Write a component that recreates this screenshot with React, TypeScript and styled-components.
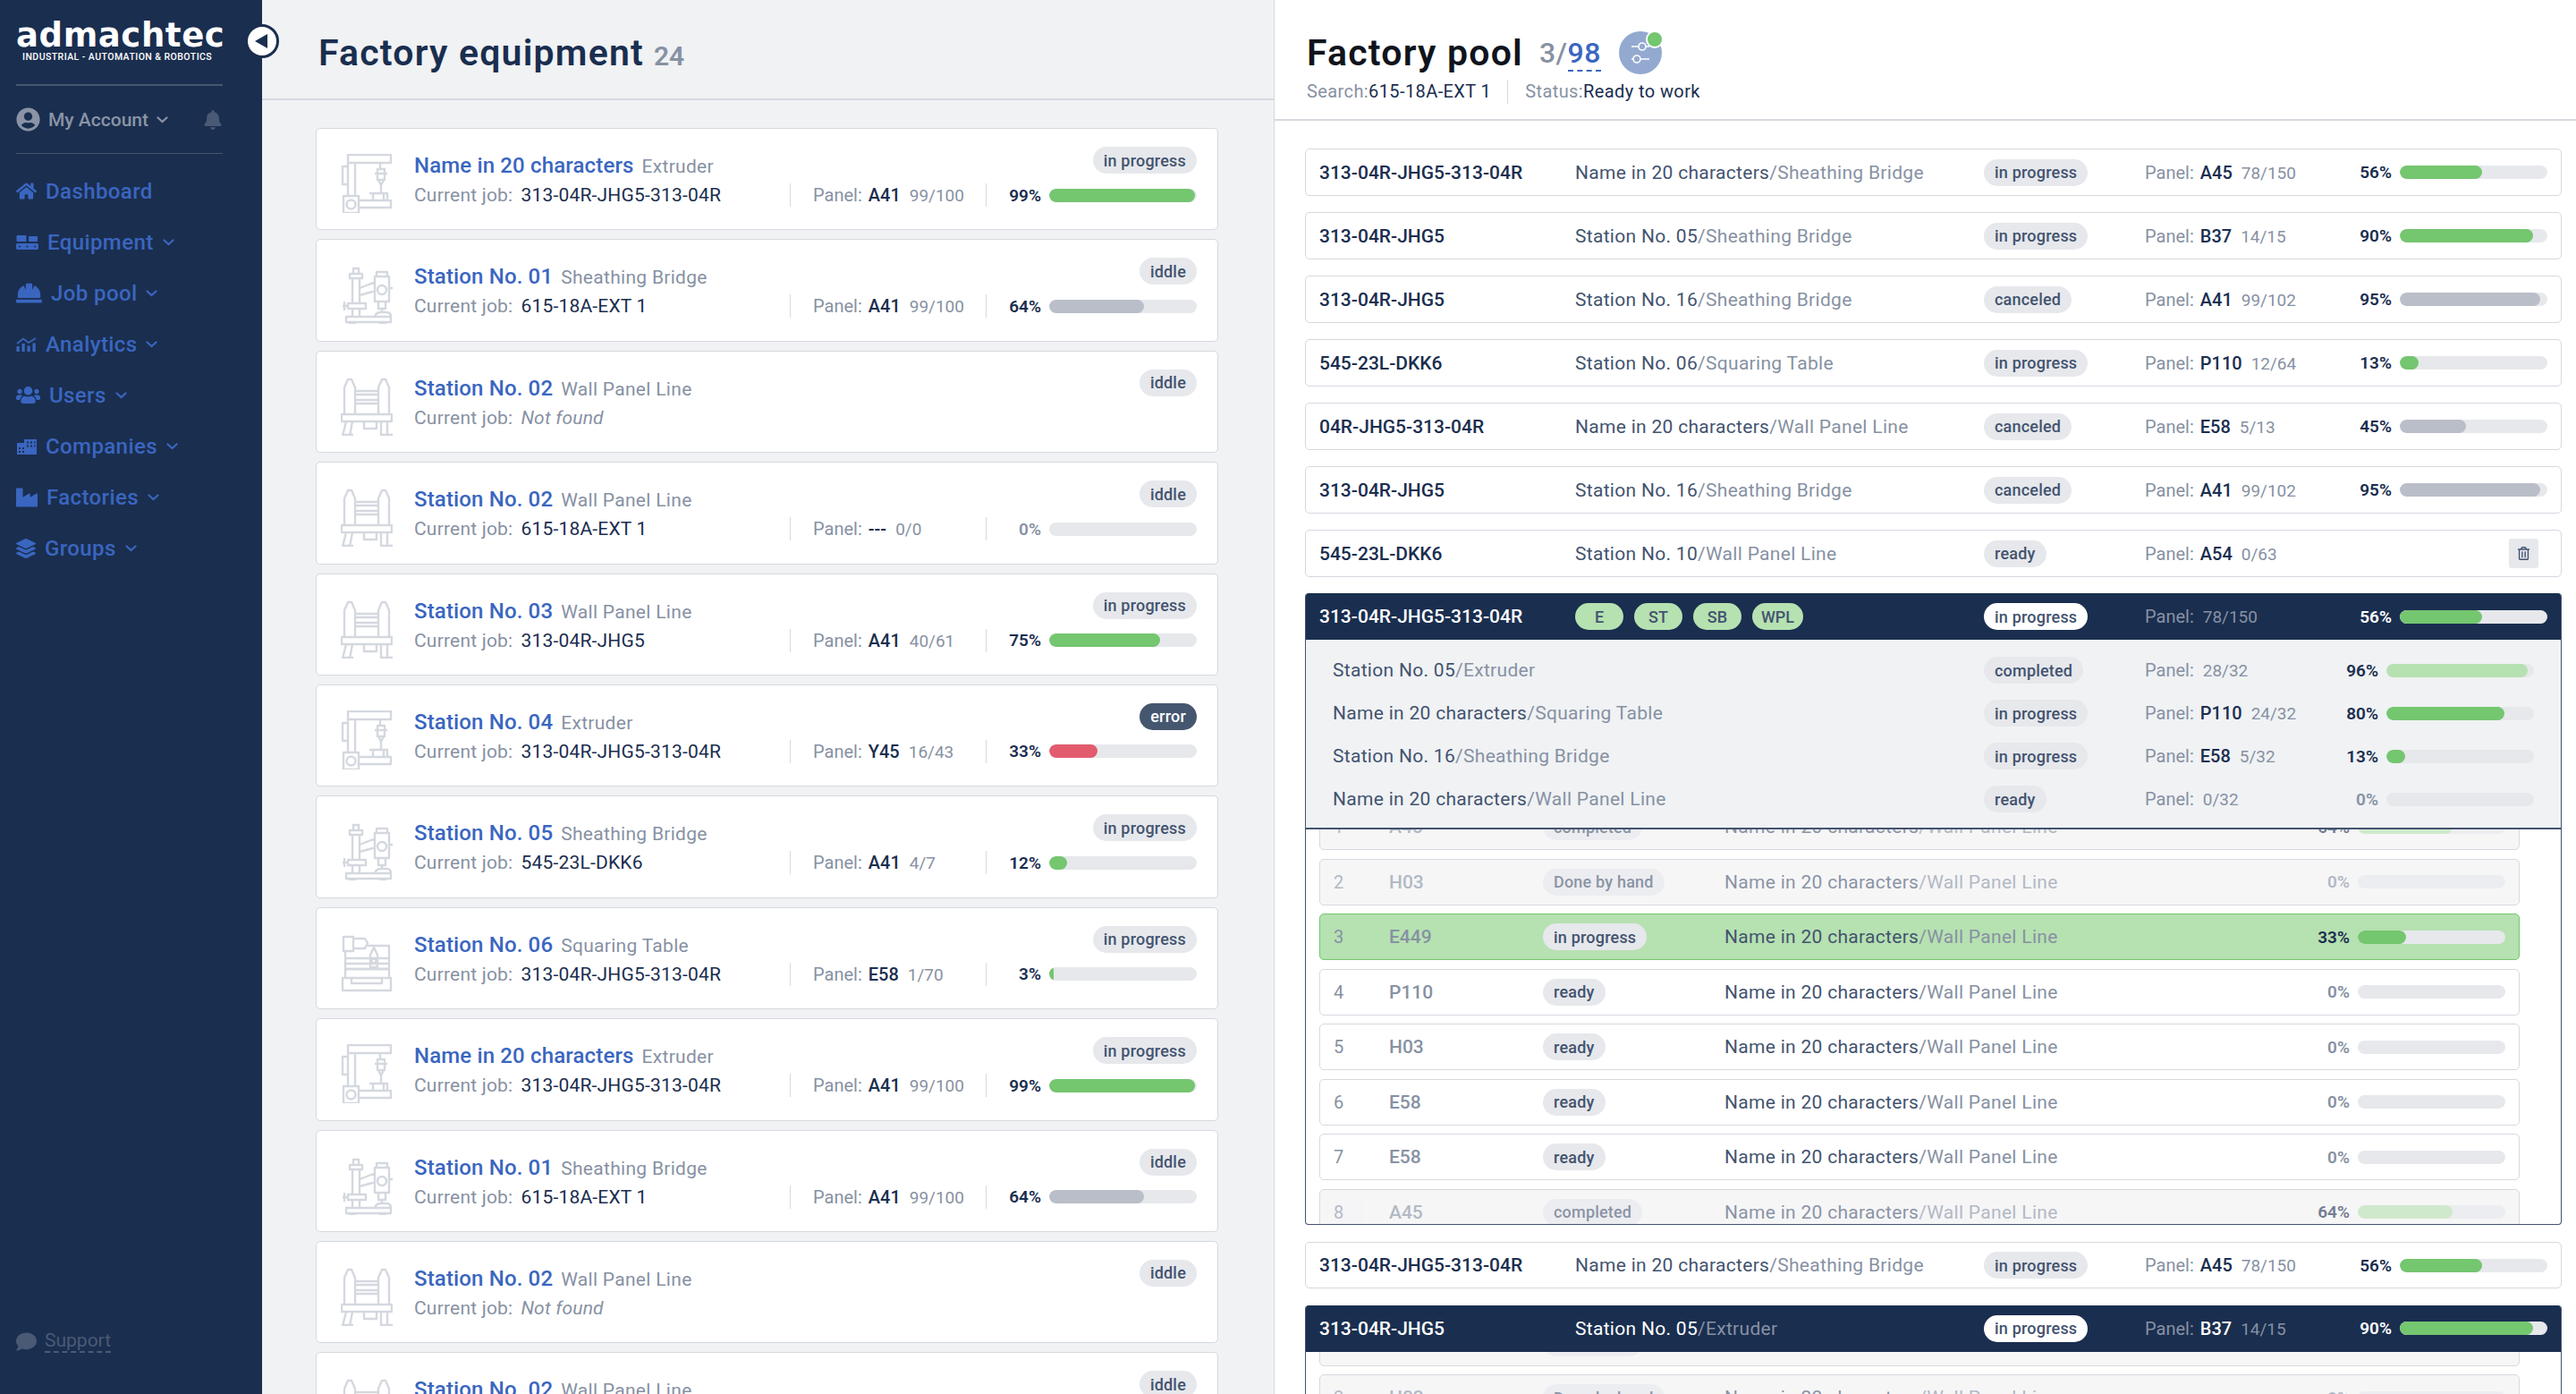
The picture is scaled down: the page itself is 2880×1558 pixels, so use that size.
import React from 'react';
import styled, { createGlobalStyle } from 'styled-components';
import { FaBell, FaComment, FaHardHat, FaHome, FaIndustry, FaLayerGroup, FaRegTrashAlt, FaUserCircle, FaUsers } from 'react-icons/fa';

const navy = '#1a2e4f';
const blue = '#3a66c0';
const green = '#74c66f';
const lightGreen = '#b6e1b1';
const grey = '#8791a3';
const slate = '#43536f';
const line = '#d5d9df';

const GlobalStyle = createGlobalStyle`
  html, body { margin: 0; height: 100%; overflow: hidden; background: #fff; }
  body { font-family: Roboto, "Open Sans", sans-serif; color: ${navy}; }
  * { box-sizing: border-box; }
`;

type MachineKind = 'extruder' | 'bridge' | 'wall' | 'table';

const MachineIcon = ({ kind }: { kind: MachineKind }) => (
  <MachineSvg viewBox="0 0 58 66" fill="none" stroke="#d4d8df" strokeWidth="2.4" strokeLinejoin="round">
    {kind === 'extruder' && (
      <>
        <path d="M8 1h48v9H8zM8 10v37M16 10v37M8 14H2v20h6M44 10v6M38 22h14M41 17h8v12h-8zM42 29l3 6 3-6M45 35v8" />
        <path d="M3 47h17v19H3zM20 52h36v8H20zM32 44h20v8M36 44v8M48 44v8" />
        <circle cx="11.5" cy="56.5" r="5" />
      </>
    )}
    {kind === 'bridge' && (
      <>
        <path d="M14 4h6v6h-6zM10 10h14v5H10zM13 15v28M21 15v28M8 43h20v6H8zM13 49v9M21 49v9M2 46h6M4 41v10" />
        <path d="M21 26l18-7M21 34l18-5M40 8h12v5H40zM38 13h16v28H38zM42 41h8v8h-8zM46 49v5M54 26h4" />
        <circle cx="46" cy="28" r="5" />
        <path d="M6 58h50v6H6zM38 58c1-4 3-5 7-5h6c3 0 5 2 5 5M10 64v2h6v-2M44 64v2h6v-2" />
      </>
    )}
    {kind === 'wall' && (
      <>
        <path d="M4 42V12l4-9h4l4 9v30M42 42V12l4-9h4l4 9v30M16 16h26M16 30h26M16 20h26v6H16z" />
        <path d="M1 42h56v8H1zM6 50L2 66M13 50l-3 16M45 50v16M52 50v16M1 65h13M44 65h14M26 50h14v8H26z" />
      </>
    )}
    {kind === 'table' && (
      <>
        <path d="M3 4h11v16H3zM14 6h13l3 5-3 6H14M30 14h20l4 0v26H5V20M5 28h49M5 34h49M33 24l4-8 4 8v14h-8z" />
        <circle cx="37" cy="31" r="2.5" />
        <path d="M5 40h49v10H5zM2 50h54v14H2zM12 50v6h34v-6" />
      </>
    )}
  </MachineSvg>
);

const ConveyorIcon = () => (
  <svg width="25" height="16" viewBox="0 0 25 16" fill="currentColor">
    <rect x="0.5" width="11" height="7" rx="1" />
    <rect x="14" y="1" width="10" height="6" rx="1" />
    <path d="M2.5 9h20a3.4 3.4 0 0 1 0 7h-20a3.4 3.4 0 0 1 0-7z" />
    <g fill={navy}><circle cx="4" cy="12.5" r="1" /><circle cx="12.5" cy="12.5" r="1" /><circle cx="21" cy="12.5" r="1" /></g>
  </svg>
);

const AnalyticsIcon = () => (
  <svg width="23" height="16" viewBox="0 0 23 16" fill="currentColor">
    <rect x="0.5" y="10" width="3.2" height="6" /><rect x="6.5" y="7" width="3.2" height="9" />
    <rect x="12.5" y="9.5" width="3.2" height="6.5" /><rect x="18.5" y="6.5" width="3.2" height="9.5" />
    <path d="M1 7l7-5.5L14 6l8-5" fill="none" stroke="currentColor" strokeWidth="1.6" />
  </svg>
);

const CompanyIcon = () => (
  <svg width="23" height="18" viewBox="0 0 23 18" fill="currentColor">
    <path fillRule="evenodd" d="M1 5h8V1h14v17H1zM12 3.500h2v2h-2zM16 3.500h2v2h-2zM20 3.500h1.500v2H20zM12 7.500h2v2h-2zM16 7.500h2v2h-2zM20 7.500h1.500v2H20zM3 10h2v2H3zM7 10h2v2H7zM3 14h2v2H3zM7 14h2v2H7z" />
  </svg>
);

const FilterIcon = () => (
  <svg width="22" height="30" viewBox="0 0 22 30" fill="none" stroke="#fff" strokeWidth="1.6">
    <circle cx="13" cy="8" r="4" /><path d="M1 8h8M17 8h4" />
    <circle cx="7" cy="22" r="4" /><path d="M1 22h2M11 22h10" />
  </svg>
);

const Chevron = () => (
  <ChevronSvg width="13" height="8" viewBox="0 0 13 8" fill="none" stroke="currentColor" strokeWidth="2.2" strokeLinecap="round">
    <path d="M1.500 1.500l5 4.500 5-4.500" />
  </ChevronSvg>
);

const navItems: { label: string; icon: React.ReactNode; arrow?: boolean }[] = [
  { label: 'Dashboard', icon: <FaHome size={23} /> },
  { label: 'Equipment', icon: <ConveyorIcon />, arrow: true },
  { label: 'Job pool', icon: <FaHardHat size={29} />, arrow: true },
  { label: 'Analytics', icon: <AnalyticsIcon />, arrow: true },
  { label: 'Users', icon: <FaUsers size={27} />, arrow: true },
  { label: 'Companies', icon: <CompanyIcon />, arrow: true },
  { label: 'Factories', icon: <FaIndustry size={24} />, arrow: true },
  { label: 'Groups', icon: <FaLayerGroup size={22} />, arrow: true },
];

interface Station {
  name: string;
  type: string;
  kind: MachineKind;
  job: string;
  status: string;
  code?: string;
  count?: string;
  pct?: number;
  tone?: 'green' | 'grey' | 'red';
}

const stations: Station[] = [
  { name: 'Name in 20 characters', type: 'Extruder', kind: 'extruder', job: '313-04R-JHG5-313-04R', status: 'in progress', code: 'A41', count: '99/100', pct: 99, tone: 'green' },
  { name: 'Station No. 01', type: 'Sheathing Bridge', kind: 'bridge', job: '615-18A-EXT 1', status: 'iddle', code: 'A41', count: '99/100', pct: 64, tone: 'grey' },
  { name: 'Station No. 02', type: 'Wall Panel Line', kind: 'wall', job: '', status: 'iddle' },
  { name: 'Station No. 02', type: 'Wall Panel Line', kind: 'wall', job: '615-18A-EXT 1', status: 'iddle', code: '---', count: '0/0', pct: 0, tone: 'grey' },
  { name: 'Station No. 03', type: 'Wall Panel Line', kind: 'wall', job: '313-04R-JHG5', status: 'in progress', code: 'A41', count: '40/61', pct: 75, tone: 'green' },
  { name: 'Station No. 04', type: 'Extruder', kind: 'extruder', job: '313-04R-JHG5-313-04R', status: 'error', code: 'Y45', count: '16/43', pct: 33, tone: 'red' },
  { name: 'Station No. 05', type: 'Sheathing Bridge', kind: 'bridge', job: '545-23L-DKK6', status: 'in progress', code: 'A41', count: '4/7', pct: 12, tone: 'green' },
  { name: 'Station No. 06', type: 'Squaring Table', kind: 'table', job: '313-04R-JHG5-313-04R', status: 'in progress', code: 'E58', count: '1/70', pct: 3, tone: 'green' },
  { name: 'Name in 20 characters', type: 'Extruder', kind: 'extruder', job: '313-04R-JHG5-313-04R', status: 'in progress', code: 'A41', count: '99/100', pct: 99, tone: 'green' },
  { name: 'Station No. 01', type: 'Sheathing Bridge', kind: 'bridge', job: '615-18A-EXT 1', status: 'iddle', code: 'A41', count: '99/100', pct: 64, tone: 'grey' },
  { name: 'Station No. 02', type: 'Wall Panel Line', kind: 'wall', job: '', status: 'iddle' },
  { name: 'Station No. 02', type: 'Wall Panel Line', kind: 'wall', job: '615-18A-EXT 1', status: 'iddle', code: '---', count: '0/0', pct: 0, tone: 'grey' },
];

const toneColors = { green, grey: '#b9bec9', red: '#e25c6e', pale: lightGreen };
type Tone = keyof typeof toneColors;

const Progress = ({ pct, tone = 'green', light }: { pct: number; tone?: Tone; light?: boolean }) => (
  <ProgressWrap>
    <Percent $light={light} $empty={pct === 0}>{pct}%</Percent>
    <Track>
      {pct > 0 && <Fill $tone={tone} style={{ width: `${Math.max(pct, 2)}%` }} />}
    </Track>
  </ProgressWrap>
);

const StationCard = ({ s }: { s: Station }) => (
  <Card>
    <MachineIcon kind={s.kind} />
    <CardBody>
      <CardTop>
        <CardTitle>{s.name}<CardType>{s.type}</CardType></CardTitle>
        <Pill $dark={s.status === 'error'}>{s.status}</Pill>
      </CardTop>
      <CardBottom>
        <JobCell>
          <Muted>Current job:</Muted>
          {s.job ? <JobValue>{s.job}</JobValue> : <NotFound>Not found</NotFound>}
        </JobCell>
        {s.pct !== undefined && (
          <>
            <PanelCell><PanelInfo code={s.code} count={s.count} /></PanelCell>
            <ProgressCell><Progress pct={s.pct} tone={s.tone} /></ProgressCell>
          </>
        )}
      </CardBottom>
    </CardBody>
  </Card>
);

const PanelInfo = ({ code, count, light }: { code?: string; count?: string; light?: boolean }) => (
  <PanelText>
    <Muted>Panel:</Muted>
    {code && <PanelCode $light={light}>{code}</PanelCode>}
    <PanelCount>{count}</PanelCount>
  </PanelText>
);

interface Job {
  id: string;
  name: string;
  type: string;
  status: string;
  code?: string;
  count: string;
  pct?: number;
  tone?: Tone;
}

const jobs: Job[] = [
  { id: '313-04R-JHG5-313-04R', name: 'Name in 20 characters', type: 'Sheathing Bridge', status: 'in progress', code: 'A45', count: '78/150', pct: 56 },
  { id: '313-04R-JHG5', name: 'Station No. 05', type: 'Sheathing Bridge', status: 'in progress', code: 'B37', count: '14/15', pct: 90 },
  { id: '313-04R-JHG5', name: 'Station No. 16', type: 'Sheathing Bridge', status: 'canceled', code: 'A41', count: '99/102', pct: 95, tone: 'grey' },
  { id: '545-23L-DKK6', name: 'Station No. 06', type: 'Squaring Table', status: 'in progress', code: 'P110', count: '12/64', pct: 13 },
  { id: '04R-JHG5-313-04R', name: 'Name in 20 characters', type: 'Wall Panel Line', status: 'canceled', code: 'E58', count: '5/13', pct: 45, tone: 'grey' },
  { id: '313-04R-JHG5', name: 'Station No. 16', type: 'Sheathing Bridge', status: 'canceled', code: 'A41', count: '99/102', pct: 95, tone: 'grey' },
  { id: '545-23L-DKK6', name: 'Station No. 10', type: 'Wall Panel Line', status: 'ready', code: 'A54', count: '0/63' },
];

const subJobs: Job[] = [
  { id: '', name: 'Station No. 05', type: 'Extruder', status: 'completed', count: '28/32', pct: 96, tone: 'pale' },
  { id: '', name: 'Name in 20 characters', type: 'Squaring Table', status: 'in progress', code: 'P110', count: '24/32', pct: 80 },
  { id: '', name: 'Station No. 16', type: 'Sheathing Bridge', status: 'in progress', code: 'E58', count: '5/32', pct: 13 },
  { id: '', name: 'Name in 20 characters', type: 'Wall Panel Line', status: 'ready', count: '0/32', pct: 0 },
];

const queue = [
  { n: 1, code: 'A45', status: 'completed', pct: 64, state: 'faded' },
  { n: 2, code: 'H03', status: 'Done by hand', pct: 0, state: 'faded' },
  { n: 3, code: 'E449', status: 'in progress', pct: 33, state: 'active' },
  { n: 4, code: 'P110', status: 'ready', pct: 0 },
  { n: 5, code: 'H03', status: 'ready', pct: 0 },
  { n: 6, code: 'E58', status: 'ready', pct: 0 },
  { n: 7, code: 'E58', status: 'ready', pct: 0 },
  { n: 8, code: 'A45', status: 'completed', pct: 64, state: 'faded' },
];

const QueueList = ({ rows }: { rows: typeof queue }) => (
  <Queue>
    {rows.map((q) => (
      <QueueRow key={q.n} $state={q.state}>
        <QueueContent $faded={q.state === 'faded'}>
          <QueueNum>{q.n}</QueueNum>
          <QueueCode>{q.code}</QueueCode>
          <div><Pill>{q.status}</Pill></div>
          <NameText>Name in 20 characters<TypeText>/Wall Panel Line</TypeText></NameText>
          <Progress pct={q.pct} tone={q.state === 'faded' ? 'pale' : 'green'} />
        </QueueContent>
      </QueueRow>
    ))}
  </Queue>
);

const JobRow = ({ job }: { job: Job }) => (
  <Row>
    <RowId>{job.id}</RowId>
    <NameText>{job.name}<TypeText>/{job.type}</TypeText></NameText>
    <div><Pill>{job.status}</Pill></div>
    <PanelInfo code={job.code} count={job.count} />
    {job.pct !== undefined
      ? <Progress pct={job.pct} tone={job.tone} />
      : <TrashButton><FaRegTrashAlt size={15} /></TrashButton>}
  </Row>
);

export default function App() {
  return (
    <Page>
      <GlobalStyle />
      <Sidebar>
        <Logo>admachtec</Logo>
        <Tagline>INDUSTRIAL - AUTOMATION &amp; ROBOTICS</Tagline>
        <Account>
          <FaUserCircle size={27} />
          <AccountName>My Account</AccountName>
          <Chevron />
          <BellSlot><FaBell size={22} /></BellSlot>
        </Account>
        <Nav>
          {navItems.map((item) => (
            <NavItem key={item.label}>
              {item.icon}
              <span>{item.label}</span>
              {item.arrow && <Chevron />}
            </NavItem>
          ))}
        </Nav>
        <Support><FaComment size={23} /><SupportLink>Support</SupportLink></Support>
        <Collapse>
          <svg width="14" height="16" viewBox="0 0 14 16"><path d="M0 8l14-8v16z" fill={navy} /></svg>
        </Collapse>
      </Sidebar>

      <Equipment>
        <EquipmentHeader>
          <Title>Factory equipment</Title>
          <TitleCount>24</TitleCount>
        </EquipmentHeader>
        <CardList>
          {stations.map((s, i) => <StationCard key={i} s={s} />)}
        </CardList>
      </Equipment>

      <Pool>
        <PoolHeader>
          <PoolTitleRow>
            <PoolTitle>Factory pool</PoolTitle>
            <PoolCount>3/<PoolTotal>98</PoolTotal></PoolCount>
            <FilterButton><FilterIcon /></FilterButton>
          </PoolTitleRow>
          <PoolMeta>
            <MetaItem><Muted>Search:</Muted>615-18A-EXT 1</MetaItem>
            <MetaItem $split><Muted>Status:</Muted>Ready to work</MetaItem>
          </PoolMeta>
        </PoolHeader>
        <PoolList>
          {jobs.map((job, i) => <JobRow key={i} job={job} />)}

          <Expanded $height={706}>
            <StickyHead>
              <DarkRow>
                <RowId $light>313-04R-JHG5-313-04R</RowId>
                <Chips>
                  {['E', 'ST', 'SB', 'WPL'].map((c) => <Chip key={c}>{c}</Chip>)}
                </Chips>
                <div><Pill $white>in progress</Pill></div>
                <PanelInfo count="78/150" />
                <Progress pct={56} light />
              </DarkRow>
              <SubList>
                {subJobs.map((job, i) => (
                  <SubRow key={i}>
                    <NameText>{job.name}<TypeText>/{job.type}</TypeText></NameText>
                    <div><Pill>{job.status}</Pill></div>
                    <PanelInfo code={job.code} count={job.count} />
                    <Progress pct={job.pct ?? 0} tone={job.tone} />
                  </SubRow>
                ))}
              </SubList>
            </StickyHead>
            <QueueUnder><QueueList rows={queue} /></QueueUnder>
          </Expanded>

          <JobRow job={{ ...jobs[0] }} />

          <Expanded $height={130}>
            <StickyHead>
              <DarkRow>
                <RowId $light>313-04R-JHG5</RowId>
                <NameText $light>Station No. 05<TypeText>/Extruder</TypeText></NameText>
                <div><Pill $white>in progress</Pill></div>
                <PanelInfo code="B37" count="14/15" light />
                <Progress pct={90} light />
              </DarkRow>
            </StickyHead>
            <QueueTail><QueueList rows={queue.slice(0, 2).map((q) => ({ ...q, pct: 0, state: 'faded' }))} /></QueueTail>
          </Expanded>
        </PoolList>
      </Pool>
    </Page>
  );
}

const Page = styled.div`
  display: flex;
  height: 1558px;
  overflow: hidden;
`;

const Sidebar = styled.aside`
  position: relative;
  flex: none;
  width: 293px;
  padding: 24px 44px 0 18px;
  display: flex;
  flex-direction: column;
  background: ${navy};
  z-index: 2;
`;

const Logo = styled.div`
  height: 32px;
  font-family: "DejaVu Sans", sans-serif;
  font-size: 37px;
  line-height: 32px;
  font-weight: 700;
  letter-spacing: 0.6px;
  color: #fff;
  white-space: nowrap;
`;

const Tagline = styled.div`
  height: 38px;
  padding: 2px 0 0 7px;
  font-size: 10.5px;
  line-height: 12px;
  font-weight: 500;
  letter-spacing: 0.45px;
  color: #fff;
  white-space: nowrap;
`;

const Account = styled.div`
  display: flex;
  align-items: center;
  gap: 9px;
  height: 78px;
  border-top: 2px solid #46566f;
  border-bottom: 1px solid #46566f;
  color: #8a94a6;
`;

const AccountName = styled.span`
  font-size: 21px;
  font-weight: 500;
`;

const BellSlot = styled.span`
  display: flex;
  margin-left: auto;
  color: #4a5a75;
`;

const ChevronSvg = styled.svg`
  flex: none;
`;

const Nav = styled.nav`
  display: flex;
  flex-direction: column;
  padding-top: 13px;
`;

const NavItem = styled.div`
  display: flex;
  align-items: center;
  gap: 10px;
  height: 57px;
  font-size: 24px;
  font-weight: 500;
  letter-spacing: 0.4px;
  color: ${blue};
`;

const Support = styled.div`
  display: flex;
  align-items: center;
  gap: 9px;
  margin-top: auto;
  padding-bottom: 46px;
  color: #4a5a75;
`;

const SupportLink = styled.span`
  font-size: 21px;
  border-bottom: 2px dashed #4a5a75;
`;

const Collapse = styled.button`
  position: absolute;
  top: 27px;
  right: -19px;
  width: 38px;
  height: 38px;
  padding: 0 3px 0 0;
  display: flex;
  align-items: center;
  justify-content: center;
  border: 3px solid ${navy};
  border-radius: 50%;
  background: #fff;
`;

const Equipment = styled.section`
  flex: none;
  width: 1131px;
  background: #f0f2f4;
`;

const EquipmentHeader = styled.header`
  display: flex;
  align-items: baseline;
  gap: 11px;
  height: 112px;
  padding: 31px 0 0 63px;
  border-bottom: 2px solid ${line};
`;

const Title = styled.h1`
  margin: 0;
  font-size: 41px;
  line-height: 56px;
  font-weight: 600;
  letter-spacing: 1.2px;
  color: ${navy};
`;

const TitleCount = styled.span`
  font-size: 30px;
  font-weight: 600;
  color: ${grey};
`;

const CardList = styled.div`
  display: flex;
  flex-direction: column;
  gap: 10px;
  padding: 31px 62px 0 60px;
`;

const Card = styled.article`
  flex: none;
  display: flex;
  align-items: flex-start;
  gap: 24px;
  height: 114.4px;
  padding: 28px 23px 0 27px;
  border: 1.500px solid ${line};
  border-radius: 5px;
  background: #fff;
`;

const MachineSvg = styled.svg`
  flex: none;
  width: 58px;
  height: 66px;
`;

const CardBody = styled.div`
  flex: 1;
  min-width: 0;
  margin-top: -8px;
`;

const CardTop = styled.div`
  display: flex;
  justify-content: space-between;
  height: 41px;
`;

const CardTitle = styled.div`
  display: flex;
  align-items: baseline;
  gap: 9px;
  padding-top: 6px;
  font-size: 24px;
  line-height: 30px;
  font-weight: 500;
  letter-spacing: 0.15px;
  color: ${blue};
`;

const CardType = styled.span`
  font-size: 21px;
  font-weight: 400;
  letter-spacing: 0.3px;
  color: ${grey};
`;

const CardBottom = styled.div`
  display: grid;
  grid-template-columns: 420px 219px 1fr;
  align-items: center;
  height: 26px;
`;

const JobCell = styled.div`
  display: flex;
  gap: 9px;
  font-size: 21px;
  letter-spacing: 0.2px;
`;

const Muted = styled.span`
  color: ${grey};
`;

const JobValue = styled.span`
  color: ${navy};
`;

const NotFound = styled.span`
  font-style: italic;
  color: ${grey};
`;

const PanelCell = styled.div`
  height: 26px;
  padding-left: 25px;
  display: flex;
  align-items: center;
  border-left: 1.500px solid ${line};
`;

const ProgressCell = styled.div`
  height: 26px;
  display: flex;
  align-items: center;
  justify-content: flex-end;
  border-left: 1.500px solid ${line};
`;

const PanelText = styled.div`
  display: flex;
  align-items: baseline;
  gap: 7px;
  font-size: 20px;
  white-space: nowrap;
`;

const PanelCode = styled.span<{ $light?: boolean }>`
  font-weight: 500;
  color: ${(p) => (p.$light ? '#fff' : navy)};
`;

const PanelCount = styled.span`
  margin-left: 3px;
  font-size: 19px;
  color: ${grey};
`;

const Pill = styled.span<{ $dark?: boolean; $white?: boolean }>`
  display: inline-flex;
  align-items: center;
  height: 30px;
  padding: 0 12px;
  border-radius: 15px;
  font-size: 18px;
  font-weight: 500;
  letter-spacing: 0.2px;
  white-space: nowrap;
  color: ${(p) => (p.$dark ? '#fff' : slate)};
  background: ${(p) => (p.$dark ? '#45566f' : p.$white ? '#fff' : '#e6e8ec')};
`;

const ProgressWrap = styled.div`
  display: flex;
  align-items: center;
  justify-content: flex-end;
  gap: 9px;
`;

const Percent = styled.span<{ $light?: boolean; $empty?: boolean }>`
  font-size: 19px;
  font-weight: 600;
  color: ${(p) => (p.$light ? '#fff' : p.$empty ? grey : navy)};
`;

const Track = styled.div`
  flex: none;
  width: 165px;
  height: 15px;
  border-radius: 8px;
  background: #e6e8ec;
  overflow: hidden;
`;

const Fill = styled.div<{ $tone: Tone }>`
  height: 100%;
  border-radius: 8px;
  background: ${(p) => toneColors[p.$tone]};
`;

const Pool = styled.section`
  flex: 1;
  min-width: 0;
  border-left: 1.500px solid ${line};
  background: #fff;
`;

const PoolHeader = styled.header`
  height: 135px;
  padding: 35px 0 0 36px;
  border-bottom: 2px solid ${line};
`;

const PoolTitleRow = styled.div`
  display: flex;
  align-items: center;
  height: 48px;
`;

const PoolTitle = styled.h2`
  margin: 0;
  font-size: 41px;
  font-weight: 600;
  letter-spacing: 1.2px;
  color: #10141c;
`;

const PoolCount = styled.span`
  margin-left: 18px;
  font-size: 32px;
  font-weight: 500;
  letter-spacing: 0.5px;
  color: ${grey};
`;

const PoolTotal = styled.span`
  color: ${blue};
  border-bottom: 2px dashed ${blue};
`;

const FilterButton = styled.button`
  position: relative;
  width: 48px;
  height: 48px;
  margin-left: 20px;
  padding: 0;
  display: flex;
  align-items: center;
  justify-content: center;
  border: 0;
  border-radius: 50%;
  background: #93a9d0;
  &::after {
    content: '';
    position: absolute;
    top: -1px;
    right: -2px;
    width: 16px;
    height: 16px;
    border: 2px solid #fff;
    border-radius: 50%;
    background: ${green};
  }
`;

const PoolMeta = styled.div`
  display: flex;
  margin-top: 6px;
  font-size: 20px;
  line-height: 27px;
  letter-spacing: 0.4px;
  color: ${navy};
`;

const MetaItem = styled.div<{ $split?: boolean }>`
  ${(p) => p.$split && `margin-left: 18px; padding-left: 19px; border-left: 1.5px solid ${line};`}
`;

const PoolList = styled.div`
  display: flex;
  flex-direction: column;
  gap: 18.5px;
  padding: 31px 16px 0 34px;
`;

const rowColumns = '286px 457px 180px minmax(0, 1fr) 250px';

const Row = styled.div`
  flex: none;
  display: grid;
  grid-template-columns: ${rowColumns};
  align-items: center;
  height: 52.5px;
  padding: 1px 15px 0;
  border: 1.500px solid ${line};
  border-radius: 5px;
  background: #fff;
`;

const RowId = styled.span<{ $light?: boolean }>`
  font-size: 21px;
  font-weight: 500;
  white-space: nowrap;
  color: ${(p) => (p.$light ? '#fff' : navy)};
`;

const NameText = styled.span<{ $light?: boolean }>`
  font-size: 21px;
  letter-spacing: 0.3px;
  white-space: nowrap;
  color: ${(p) => (p.$light ? '#fff' : slate)};
`;

const TypeText = styled.span`
  color: ${grey};
`;

const TrashButton = styled.span`
  justify-self: end;
  width: 33px;
  height: 33px;
  margin-right: 10px;
  display: flex;
  align-items: center;
  justify-content: center;
  border-radius: 3px;
  background: #e6e8ec;
  color: ${slate};
`;

const Expanded = styled.div<{ $height: number }>`
  flex: none;
  height: ${(p) => p.$height}px;
  border: 1.500px solid #43536f;
  border-top: 0;
  border-radius: 4px;
  overflow: hidden;
`;

const StickyHead = styled.div`
  position: relative;
  z-index: 1;
`;

const DarkRow = styled.div`
  display: grid;
  grid-template-columns: ${rowColumns};
  align-items: center;
  height: 52px;
  padding: 0 15px;
  background: ${navy};
`;

const Chips = styled.div`
  display: flex;
  gap: 12px;
`;

const Chip = styled.span`
  min-width: 54px;
  height: 30px;
  padding: 0 10px;
  display: flex;
  align-items: center;
  justify-content: center;
  border-radius: 15px;
  font-size: 18px;
  font-weight: 500;
  color: ${slate};
  background: ${lightGreen};
`;

const SubList = styled.div`
  padding: 10px 0 8px;
  border-bottom: 2.500px solid #43536f;
  background: #f0f2f4;
`;

const SubRow = styled.div`
  display: grid;
  grid-template-columns: 728px 180px minmax(0, 1fr) 250px;
  align-items: center;
  height: 48px;
  padding: 0 30px;
`;

const Queue = styled.div`
  display: flex;
  flex-direction: column;
  gap: 9.5px;
  padding: 0 46px 0 15px;
`;

const QueueUnder = styled.div`
  margin-top: -29px;
`;

const QueueTail = styled.div`
  margin-top: -36px;
`;

const queueBackground = (state?: string) =>
  state === 'active' ? lightGreen : state === 'faded' ? '#f6f6f7' : '#fff';

const QueueRow = styled.div<{ $state?: string }>`
  height: 52px;
  border: 1.500px solid ${(p) => (p.$state === 'active' ? green : line)};
  border-radius: 5px;
  background: ${(p) => queueBackground(p.$state)};
`;

const QueueContent = styled.div<{ $faded?: boolean }>`
  display: grid;
  grid-template-columns: 62px 172px 203px minmax(0, 1fr) 250px;
  align-items: center;
  height: 100%;
  padding: 0 15px;
  opacity: ${(p) => (p.$faded ? 0.6 : 1)};
`;

const QueueNum = styled.span`
  font-size: 20px;
  color: ${grey};
`;

const QueueCode = styled.span`
  font-size: 21px;
  font-weight: 500;
  color: ${grey};
`;
